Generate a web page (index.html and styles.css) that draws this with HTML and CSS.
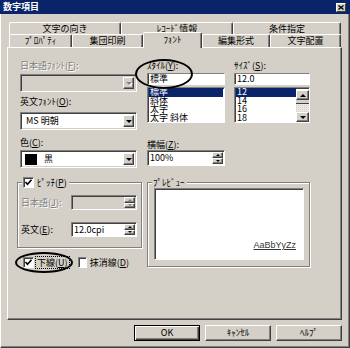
FILE: index.html
```html
<!DOCTYPE html>
<html lang="ja">
<head>
    <meta charset="UTF-8">
    <title>数字項目</title>
    <link rel="stylesheet" href="styles.css">
</head>
<body>
    <div class="window">
        <div class="titlebar">
            <span class="title">数字項目</span>
            <span class="close-btn">
                <svg width="6" height="5" viewBox="0 0 6 5"><path d="M0.5 0.5 L5.5 4.5 M5.5 0.5 L0.5 4.5" stroke="#000" stroke-width="1.3" fill="none"/></svg>
            </span>
        </div>

        <div class="client">
            <div class="tabs">
                <div class="tab-row back">
                    <span class="tab" style="width:112px">文字の向き</span>
                    <span class="tab" style="width:112px">ﾚｺｰﾄﾞ情報</span>
                    <span class="tab" style="width:108px">条件指定</span>
                </div>
                <div class="tab-row front">
                    <span class="tab" style="width:63px">ﾌﾟﾛﾊﾟﾃｨ</span>
                    <span class="tab" style="width:71px">集団印刷</span>
                    <span class="tab active" style="width:59px">ﾌｫﾝﾄ</span>
                    <span class="tab" style="width:68px">編集形式</span>
                    <span class="tab" style="width:71px">文字配置</span>
                </div>
            </div>

            <div class="panel">
                <div class="col-left">
                    <div class="label disabled">日本語ﾌｫﾝﾄ(<u>F</u>):</div>
                    <div class="combo disabled first">
                        <span class="value"></span>
                        <span class="drop"><i class="arrow"></i></span>
                    </div>
                    <div class="label">英文ﾌｫﾝﾄ(<u>O</u>):</div>
                    <div class="combo">
                        <span class="value">MS 明朝</span>
                        <span class="drop"><i class="arrow"></i></span>
                    </div>
                    <div class="label label-color">色(<u>C</u>):</div>
                    <div class="combo combo-color">
                        <span class="value"><i class="swatch"></i>黒</span>
                        <span class="drop"><i class="arrow"></i></span>
                    </div>
                </div>

                <div class="col-right">
                    <div class="pair">
                        <div class="field style-field">
                            <div class="label">ｽﾀｲﾙ(<u>Y</u>):</div>
                            <div class="edit">標準</div>
                            <div class="listbox">
                                <div class="item selected">標準</div>
                                <div class="item">斜体</div>
                                <div class="item">太字</div>
                                <div class="item">太字 斜体</div>
                            </div>
                        </div>
                        <div class="field size-field">
                            <div class="label">ｻｲｽﾞ(<u>S</u>):</div>
                            <div class="edit">12.0</div>
                            <div class="listbox with-scroll">
                                <div class="items">
                                    <div class="item selected">12</div>
                                    <div class="item">14</div>
                                    <div class="item">16</div>
                                    <div class="item">18</div>
                                </div>
                                <div class="scrollbar">
                                    <span class="sb-btn"><i class="arrow up"></i></span>
                                    <span class="sb-thumb"></span>
                                    <span class="sb-track"></span>
                                    <span class="sb-btn"><i class="arrow"></i></span>
                                </div>
                            </div>
                        </div>
                    </div>
                    <div class="label label-width">横幅(<u>Z</u>):</div>
                    <div class="spin spin-width">
                        <span class="value">100%</span>
                        <span class="spin-btns">
                            <span class="spin-btn"><i class="tiny up"></i></span>
                            <span class="spin-btn"><i class="tiny"></i></span>
                        </span>
                    </div>
                </div>

                <div class="col-left lower">
                    <div class="group pitch">
                        <span class="legend">
                            <span class="check checked"><svg width="9" height="9" viewBox="0 0 9 9"><path d="M1.5 4 L3.5 6.2 L7.5 1.8" stroke="#000" stroke-width="1.6" fill="none"/></svg></span>
                            <span>ﾋﾟｯﾁ(<u>P</u>)</span>
                        </span>
                        <div class="spin-row">
                            <span class="spin-label disabled">日本語(<u>J</u>):</span>
                            <div class="spin disabled">
                                <span class="value"></span>
                                <span class="spin-btns">
                                    <span class="spin-btn"><i class="tiny up"></i></span>
                                    <span class="spin-btn"><i class="tiny"></i></span>
                                </span>
                            </div>
                        </div>
                        <div class="spin-row">
                            <span class="spin-label">英文(<u>E</u>):</span>
                            <div class="spin">
                                <span class="value">12.0cpi</span>
                                <span class="spin-btns">
                                    <span class="spin-btn"><i class="tiny up"></i></span>
                                    <span class="spin-btn"><i class="tiny"></i></span>
                                </span>
                            </div>
                        </div>
                    </div>
                    <div class="check-row">
                        <span class="check checked"><svg width="9" height="9" viewBox="0 0 9 9"><path d="M1.5 4 L3.5 6.2 L7.5 1.8" stroke="#000" stroke-width="1.6" fill="none"/></svg></span>
                        <span class="check-label focus">下線(<u>U</u>)</span>
                        <span class="check"></span>
                        <span class="check-label">抹消線(<u>D</u>)</span>
                    </div>
                </div>

                <div class="group preview">
                    <span class="legend">ﾌﾟﾚﾋﾞｭｰ</span>
                    <div class="preview-box">
                        <span class="sample">AaBbYyZz</span>
                    </div>
                </div>
            </div>

            <div class="buttons">
                <span class="btn default">OK</span>
                <span class="btn">ｷｬﾝｾﾙ</span>
                <span class="btn">ﾍﾙﾌﾟ</span>
            </div>
        </div>

        <!-- hand-drawn marks over the dialog -->
        <div class="mark mark-style"></div>
        <div class="mark mark-underline"></div>
    </div>
</body>
</html>
```

FILE: styles.css
```css
body {
    margin: 0;
    font-family: "Noto Sans CJK JP", "Noto Sans", sans-serif;
    font-size: 9px;
    color: #000;
}

u {
    text-decoration: underline;
    text-underline-offset: 1px;
}

.window {
    position: relative;
    width: 350px;
    height: 348px;
    background-color: #d4d0c8;
    overflow: hidden;
}

.titlebar {
    display: flex;
    align-items: center;
    justify-content: space-between;
    height: 14px;
    padding: 0 4px 0 3px;
    background-color: #0a246a;
    color: #fff;
}

.title {
    font-weight: bold;
    line-height: 14px;
}

.close-btn {
    display: flex;
    align-items: center;
    justify-content: center;
    width: 10px;
    height: 9px;
    box-sizing: border-box;
    background-color: #d4d0c8;
    border: 1px solid;
    border-color: #fff #404040 #404040 #fff;
}

.client {
    box-sizing: border-box;
    height: 334px;
    padding: 7px 7px 0 6px;
    border: 1px solid;
    border-color: transparent #404040 #404040 #fff;
    border-top: none;
    box-shadow: inset -1px -1px #808080;
}

/* tabs */
.tabs {
    margin-left: 2px;
    padding-top: 1px;
}

.tab-row {
    display: flex;
}

.tab-row.back {
    height: 12px;
}

.tab-row.front {
    height: 13px;
    align-items: flex-start;
}

.tab {
    box-sizing: border-box;
    height: 100%;
    text-align: center;
    line-height: 12px;
    background-color: #d4d0c8;
    border-top: 1px solid #fff;
    border-left: 1px solid #fff;
    border-right: 1px solid #404040;
    border-radius: 2px 2px 0 0;
    box-shadow: inset -1px 0 #808080;
}

.tab.active {
    position: relative;
    z-index: 1;
    height: 16px;
    margin-top: -2px;
    line-height: 14px;
}

.panel {
    box-sizing: border-box;
    height: 273px;
    padding: 12px 0 0 9px;
    border: 1px solid;
    border-color: #fff #404040 #404040 #fff;
    box-shadow: inset -1px -1px #808080;
    display: grid;
    grid-template-columns: 125px 163px;
    grid-template-rows: 108px auto;
    column-gap: 5px;
    row-gap: 14px;
}

/* labels and fields */
.label {
    height: 12px;
    line-height: 12px;
    white-space: nowrap;
}

.disabled,
.label.disabled {
    color: #808080;
    text-shadow: 1px 1px 0 #fff;
}

.col-left {
    padding-left: 3px;
}

.col-left .label {
    margin-top: 4px;
}

.col-left .label:first-child {
    margin-top: 0;
}

.col-left .label-color {
    margin-top: 7px;
}

.combo {
    box-sizing: border-box;
    display: flex;
    width: 117px;
    height: 18px;
    margin-top: 4px;
    background-color: #fff;
    border: 1px solid;
    border-color: #808080 #fff #fff #808080;
    box-shadow: inset 1px 1px #404040, inset -1px -1px #d4d0c8;
    padding: 2px;
}

.combo.first {
    margin-top: 2px;
}

.combo-color {
    margin-top: 1px;
}

.combo.disabled {
    background-color: #d4d0c8;
}

.combo .value {
    flex: 1;
    line-height: 12px;
    padding-left: 3px;
    display: flex;
    align-items: center;
}

.swatch {
    display: inline-block;
    width: 12px;
    height: 11px;
    background-color: #000;
    margin: 0 7px 0 -1px;
}

.drop,
.sb-btn,
.spin-btn {
    box-sizing: border-box;
    display: flex;
    align-items: center;
    justify-content: center;
    background-color: #d4d0c8;
    border: 1px solid;
    border-color: #fff #404040 #404040 #fff;
    box-shadow: inset -1px -1px #808080;
}

.drop {
    width: 11px;
}

.arrow {
    width: 0;
    height: 0;
    border-left: 3px solid transparent;
    border-right: 3px solid transparent;
    border-top: 3px solid #000;
}

.arrow.up {
    border-top: none;
    border-bottom: 3px solid #000;
}

.combo.disabled .arrow {
    border-top-color: #808080;
    filter: drop-shadow(1px 1px 0 #fff);
}

.tiny {
    width: 0;
    height: 0;
    border-left: 2px solid transparent;
    border-right: 2px solid transparent;
    border-top: 2px solid #000;
}

.tiny.up {
    border-top: none;
    border-bottom: 2px solid #000;
}

.spin.disabled .tiny {
    border-top-color: #808080;
    border-bottom-color: #808080;
}

/* right column */
.pair {
    display: flex;
    gap: 9px;
}

.style-field {
    width: 78px;
}

.size-field {
    width: 76px;
}

.edit {
    box-sizing: border-box;
    height: 12px;
    margin-top: 1px;
    padding-left: 2px;
    line-height: 10px;
    background-color: #fff;
    border: 1px solid;
    border-color: #808080 #fff #fff #808080;
    box-shadow: inset 1px 0 #404040;
}

.listbox {
    box-sizing: border-box;
    height: 36px;
    margin-top: 2px;
    background-color: #fff;
    border: 1px solid;
    border-color: #808080 #fff #fff #808080;
    box-shadow: inset 1px 1px #404040;
    padding: 0 1px;
}

.listbox.with-scroll {
    display: flex;
    padding-right: 0;
}

.items {
    flex: 1;
}

.item {
    height: 8.5px;
    font-size: 9px;
    line-height: 8.5px;
    padding-left: 1px;
    white-space: nowrap;
}

.item.selected {
    background-color: #0a246a;
    color: #fff;
}

.scrollbar {
    width: 13px;
    display: flex;
    flex-direction: column;
    margin-top: 2px;
}

.sb-btn {
    height: 10px;
}

.sb-thumb {
    box-sizing: border-box;
    height: 4px;
    background-color: #d4d0c8;
    border-bottom: 1px solid #404040;
}

.sb-track {
    flex: 1;
    background-color: #ece9e3;
    background-image: linear-gradient(45deg, #d4d0c8 25%, transparent 25%, transparent 75%, #d4d0c8 75%);
    background-size: 2px 2px;
}

.label-width {
    height: 10px;
    line-height: 10px;
    margin-top: 17px;
}

.spin {
    box-sizing: border-box;
    display: flex;
    height: 16px;
    background-color: #fff;
    border: 1px solid;
    border-color: #808080 #fff #fff #808080;
    box-shadow: inset 1px 1px #404040;
    padding: 1px;
}

.spin.disabled {
    background-color: #d4d0c8;
}

.spin-width {
    width: 78px;
}

.spin .value {
    flex: 1;
    line-height: 12px;
    padding-left: 1px;
}

.spin-btns {
    display: flex;
    flex-direction: column;
    width: 11px;
}

.spin-btn {
    flex: 1;
}

/* group boxes */
.group {
    position: relative;
    box-sizing: border-box;
    border: 1px solid #808080;
    box-shadow: inset 1px 1px #fff, 1px 1px 0 #fff;
}

.legend {
    position: absolute;
    top: -6px;
    display: flex;
    align-items: center;
    gap: 3px;
    height: 11px;
    line-height: 11px;
    padding: 0 2px 0 1px;
    background-color: #d4d0c8;
    white-space: nowrap;
}

.col-left.lower {
    padding-left: 0;
}

.pitch {
    width: 125px;
    height: 66px;
    padding: 0 4px 0 3px;
}

.pitch .legend {
    left: 4px;
}

.spin-row {
    display: flex;
    align-items: center;
    justify-content: space-between;
    margin-top: 12px;
}

.spin-row .spin {
    width: 66px;
    height: 15px;
}

.spin-label {
    white-space: nowrap;
}

.check {
    box-sizing: border-box;
    display: inline-flex;
    align-items: center;
    justify-content: center;
    width: 11px;
    height: 11px;
    background-color: #fff;
    border: 1px solid;
    border-color: #808080 #fff #fff #808080;
    box-shadow: inset 1px 1px #404040;
}

.check-row {
    display: flex;
    align-items: center;
    margin: 9px 0 0 6px;
    height: 11px;
}

.check-label {
    margin: 0 12px 0 2px;
    padding: 0 1px;
    line-height: 11px;
    white-space: nowrap;
}

.check-label.focus {
    outline: 1px dotted #000;
    margin-right: 9px;
}

.preview {
    grid-column: 2;
    grid-row: 2;
    width: 163px;
    height: 85px;
    padding: 5px 5px 0 6px;
}

.preview .legend {
    left: 4px;
}

.preview-box {
    box-sizing: border-box;
    height: 72px;
    display: flex;
    align-items: flex-end;
    justify-content: flex-end;
    padding: 0 7px 9px 0;
    background-color: #fff;
    border: 1px solid;
    border-color: #808080 #fff #fff #808080;
    box-shadow: inset 1px 1px #404040;
}

.sample {
    font-family: "Liberation Sans", Arial, sans-serif;
    font-size: 9px;
    line-height: 10px;
    color: #333;
    text-decoration: underline;
}

/* dialog buttons */
.buttons {
    display: flex;
    justify-content: flex-end;
    gap: 5px;
    margin-top: 5px;
}

.btn {
    box-sizing: border-box;
    width: 66px;
    height: 16px;
    line-height: 13px;
    text-align: center;
    background-color: #d4d0c8;
    border: 1px solid;
    border-color: #fff #404040 #404040 #fff;
    box-shadow: inset -1px -1px #808080;
}

.btn.default {
    border-color: #000;
    box-shadow: inset 1px 1px #fff, inset -1px -1px #404040, inset -2px -2px #808080;
}

/* annotation ellipses */
.mark {
    position: absolute;
    box-sizing: border-box;
    border: 2px solid #000;
    border-radius: 50%;
}

.mark-style {
    left: 135px;
    top: 59px;
    width: 58px;
    height: 30px;
}

.mark-underline {
    left: 15px;
    top: 252px;
    width: 58px;
    height: 21px;
}
```
